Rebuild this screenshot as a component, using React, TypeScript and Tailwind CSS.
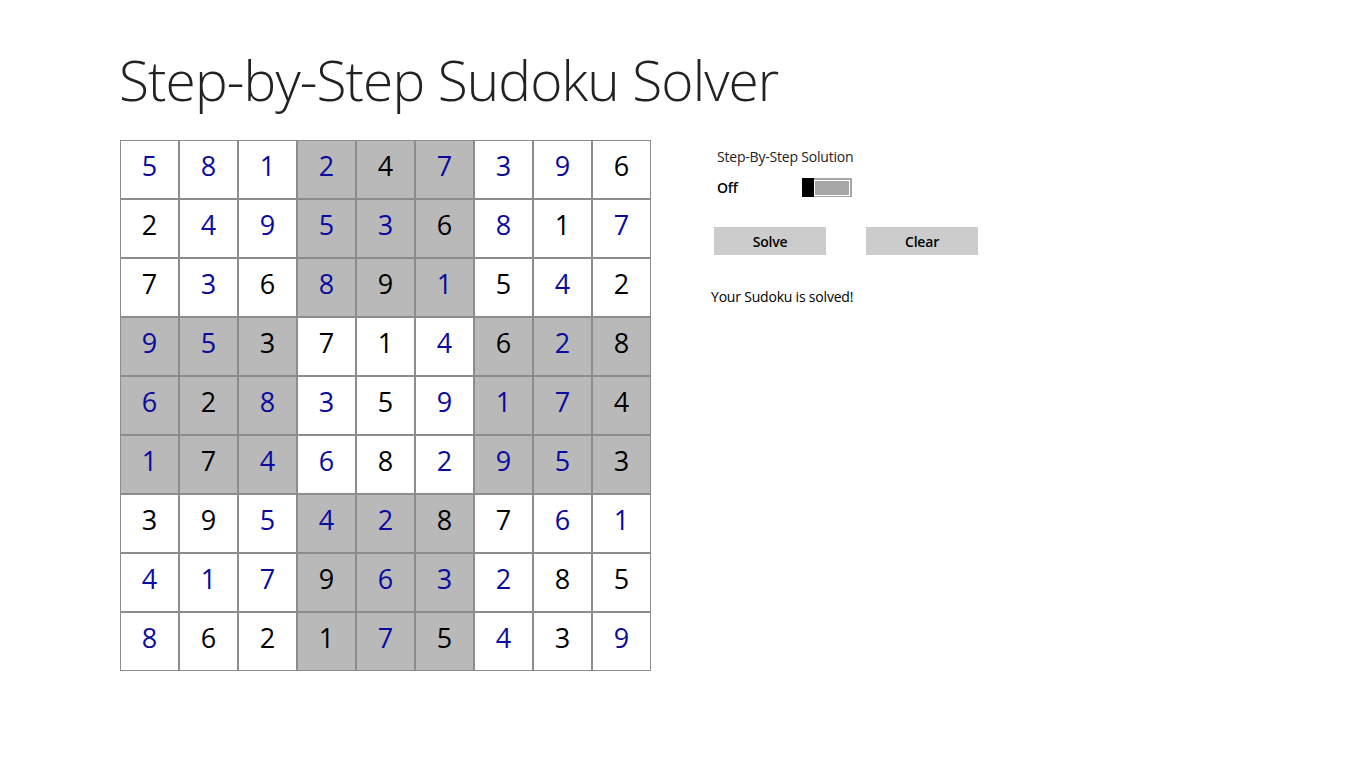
const grid = [
  "5b 8b 1b 2b 4k 7b 3b 9b 6k",
  "2k 4b 9b 5b 3b 6k 8b 1k 7b",
  "7k 3b 6k 8b 9k 1b 5k 4b 2k",
  "9b 5b 3k 7k 1k 4b 6k 2b 8k",
  "6b 2k 8b 3b 5k 9b 1b 7b 4k",
  "1b 7k 4b 6b 8k 2b 9b 5b 3k",
  "3k 9k 5b 4b 2b 8k 7k 6b 1b",
  "4b 1b 7b 9k 6b 3b 2b 8k 5k",
  "8b 6k 2k 1k 7b 5k 4b 3k 9b",
].map((r) => r.split(" "));

export default function App() {
  return (
    <div
      className="w-[1366px] h-[768px] bg-white pl-[120px] pt-[44px] text-black"
      style={{ fontFamily: '"Open Sans", "Noto Sans", sans-serif' }}
    >
      <h1 className="text-[55px] font-light leading-[72px] text-[#222] tracking-[-0.9px] -ml-[1px]">
        Step-by-Step Sudoku Solver
      </h1>
      <div className="flex mt-[24px] gap-[60px]">
        <div className="grid grid-cols-[repeat(9,59px)] w-[531px]">
          {grid.map((row, r) =>
            row.map((cell, c) => {
              const shaded = (Math.floor(r / 3) + Math.floor(c / 3)) % 2 === 1;
              return (
                <div
                  key={`${r}-${c}`}
                  className={`h-[59px] border border-[#8c8c8c] flex items-center justify-center pb-[6px] text-[27px] ${
                    shaded ? "bg-[#b9b9b9]" : "bg-white"
                  } ${cell[1] === "b" ? "text-[#0a0a9e]" : "text-black"}`}
                >
                  {cell[0]}
                </div>
              );
            })
          )}
        </div>
        <div className="flex flex-col text-[14px] pt-[7px]">
          <div className="pl-[6px] leading-[20px] text-[#222] tracking-[-0.2px]">Step-By-Step Solution</div>
          <div className="flex items-center pl-[6px] mt-[10px] h-[20px]">
            <span className="w-[85px] font-semibold tracking-[-0.2px]">Off</span>
            <div className="w-[50px] h-[19px] bg-[#a6a6a6] flex">
              <div className="w-[12px] h-full bg-black" />
              <div className="flex-1 mt-[2px] mb-[1px] mr-[2px] border border-white" />
            </div>
          </div>
          <div className="flex gap-[40px] pl-[3px] mt-[30px]">
            <button className="w-[112px] h-[28px] bg-[#cccccc] font-semibold text-[14px] tracking-[-0.2px]">Solve</button>
            <button className="w-[112px] h-[28px] bg-[#cccccc] font-semibold text-[14px] tracking-[-0.2px]">Clear</button>
          </div>
          <div className="mt-[32px] leading-[20px] tracking-[-0.2px]">Your Sudoku is solved!</div>
        </div>
      </div>
    </div>
  );
}
